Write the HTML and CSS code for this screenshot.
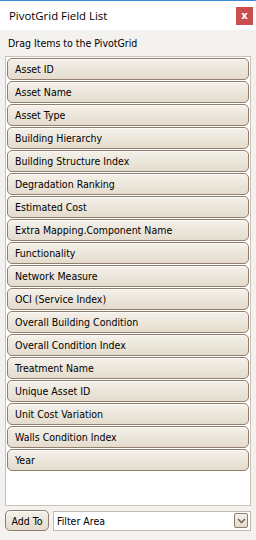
FILE: index.html
```html
<!DOCTYPE html>
<html>
<head>
<meta charset="utf-8">
<link rel="stylesheet" href="styles.css">
</head>
<body>
<div class="window">
  <div class="titlebar">
    <span class="title">PivotGrid Field List</span>
    <span class="close">x</span>
  </div>
  <div class="body">
    <div class="hint">Drag Items to the PivotGrid</div>
    <div class="list">
      <div class="item">Asset ID</div>
      <div class="item">Asset Name</div>
      <div class="item">Asset Type</div>
      <div class="item">Building Hierarchy</div>
      <div class="item">Building Structure Index</div>
      <div class="item">Degradation Ranking</div>
      <div class="item">Estimated Cost</div>
      <div class="item">Extra Mapping.Component Name</div>
      <div class="item">Functionality</div>
      <div class="item">Network Measure</div>
      <div class="item">OCI (Service Index)</div>
      <div class="item">Overall Building Condition</div>
      <div class="item">Overall Condition Index</div>
      <div class="item">Treatment Name</div>
      <div class="item">Unique Asset ID</div>
      <div class="item">Unit Cost Variation</div>
      <div class="item">Walls Condition Index</div>
      <div class="item">Year</div>
    </div>
    <div class="footer">
      <div class="btn">Add To</div>
      <div class="combo">
        <span class="combo-text">Filter Area</span>
        <span class="combo-btn"><svg width="9" height="6" viewBox="0 0 9 6"><path d="M1 1 L4.5 4.5 L8 1" fill="none" stroke="#6b5a4c" stroke-width="1.3"/></svg></span>
      </div>
    </div>
  </div>
</div>
</body>
</html>
```
FILE: styles.css
```css
html, body {
  margin: 0;
  padding: 0;
  background: #f4f2ee;
}
.window {
  width: 256px;
  height: 540px;
  display: flex;
  flex-direction: column;
  border-top: 1px solid #3f8bd8;
  box-sizing: border-box;
  background: #f4f2ee;
}
.titlebar {
  height: 29px;
  background: #ffffff;
  display: flex;
  align-items: center;
  justify-content: space-between;
  padding: 0 3px 0 9px;
}
.title {
  font-family: "Open Sans", sans-serif;
  font-size: 11.4px;
  color: #000;
}
.close {
  width: 17px;
  height: 18px;
  background: #c9504f;
  color: #fff;
  font-family: "DejaVu Sans", sans-serif;
  font-weight: bold;
  font-size: 10px;
  display: flex;
  align-items: center;
  justify-content: center;
  line-height: 1;
}
.body {
  flex: 1;
  display: flex;
  flex-direction: column;
  padding: 0 5px 0 5px;
  font-family: "DejaVu Sans Condensed", "DejaVu Sans", sans-serif;
  font-stretch: semi-condensed;
  font-size: 10.5px;
  color: #000;
}
.hint {
  height: 26px;
  display: flex;
  align-items: center;
  padding-left: 3px;
}
.list {
  height: 450px;
  box-sizing: border-box;
  border: 1px solid #cbc0b6;
  background: #fff;
  padding: 1px 1px 0 1px;
  display: flex;
  flex-direction: column;
  gap: 1px;
}
.item {
  height: 22px;
  box-sizing: border-box;
  border: 1px solid #8f7d6d;
  border-radius: 5px;
  background: linear-gradient(#f4f1ea, #e4dccd);
  box-shadow: inset 0 1px 0 #fbfaf7;
  padding-left: 7px;
  display: flex;
  align-items: center;
  white-space: nowrap;
  overflow: hidden;
}
.footer {
  display: flex;
  align-items: center;
  gap: 4px;
  padding-top: 4px;
}
.btn {
  width: 44px;
  height: 21px;
  box-sizing: border-box;
  border: 1px solid #8f7d6d;
  border-radius: 5px;
  background: linear-gradient(#f4f1ea, #e4dccd);
  box-shadow: inset 0 1px 0 #fbfaf7;
  display: flex;
  align-items: center;
  justify-content: center;
}
.combo {
  flex: 1;
  height: 20px;
  box-sizing: border-box;
  border: 1px solid #c4b8ad;
  background: #fff;
  display: flex;
  align-items: center;
  justify-content: space-between;
  padding: 0 2px 0 3px;
}
.combo-btn {
  width: 14px;
  height: 15px;
  box-sizing: border-box;
  border: 1px solid #8f7d6d;
  border-radius: 2px;
  background: linear-gradient(#f4f1ea, #e4dccd);
  display: flex;
  align-items: center;
  justify-content: center;
}
```
